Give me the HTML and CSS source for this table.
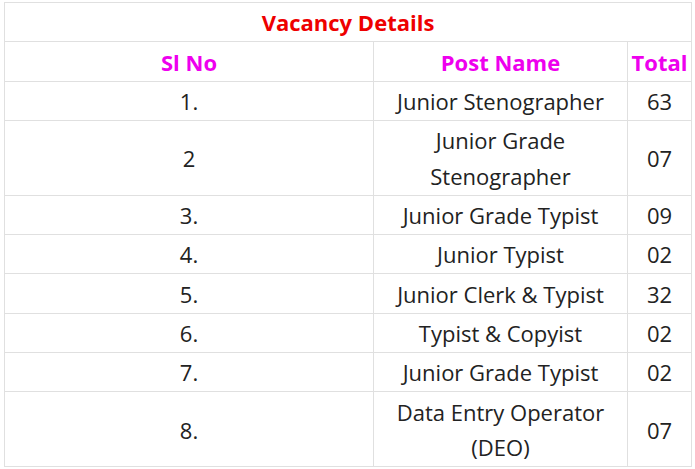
FILE: index.html
```html
<!DOCTYPE html>
<html>
<head>
<meta charset="utf-8">
<link rel="stylesheet" href="styles.css">
</head>
<body>
<table class="vac">
  <colgroup>
    <col class="c1"><col class="c2"><col class="c3">
  </colgroup>
  <tr><td colspan="3" class="title">Vacancy Details</td></tr>
  <tr class="head"><td>Sl No</td><td>Post Name</td><td>Total</td></tr>
  <tr><td>1.</td><td>Junior Stenographer</td><td>63</td></tr>
  <tr><td>2</td><td>Junior Grade<br>Stenographer</td><td>07</td></tr>
  <tr><td>3.</td><td>Junior Grade Typist</td><td>09</td></tr>
  <tr><td>4.</td><td>Junior Typist</td><td>02</td></tr>
  <tr><td>5.</td><td>Junior Clerk &amp; Typist</td><td>32</td></tr>
  <tr><td>6.</td><td>Typist &amp; Copyist</td><td>02</td></tr>
  <tr><td>7.</td><td>Junior Grade Typist</td><td>02</td></tr>
  <tr><td>8.</td><td>Data Entry Operator<br>(DEO)</td><td>07</td></tr>
</table>
</body>
</html>
```
FILE: styles.css
```css
html, body { margin: 0; padding: 0; background: #fff; }
body { padding: 2px 0 0 4px; }
.vac {
  border-collapse: collapse;
  width: 687px;
  table-layout: fixed;
  font-family: "Open Sans", "Noto Sans", sans-serif;
  font-size: 22px;
  color: #222;
}
.c1 { width: 369px; }
.c2 { width: 254px; }
.c3 { width: 64px; }
.vac td {
  border: 1px solid #e0e0e0;
  text-align: center;
  vertical-align: middle;
  padding: 2.3px 0 0.3px;
  line-height: 35.7px;
  white-space: nowrap;
}
.title { color: #ee0000; font-weight: 700; }
.head td { color: #ee00ee; font-weight: 700; }
```
